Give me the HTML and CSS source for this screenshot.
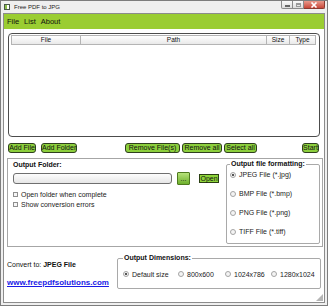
FILE: index.html
```html
<!DOCTYPE html>
<html lang="en">
<head>
    <meta charset="UTF-8">
    <title>Free PDF to JPG</title>
    <link rel="stylesheet" href="styles.css">
</head>
<body>
    <div class="window">
        <div class="titlebar">
            <span class="app-icon"></span>
            <span class="title">Free PDF to JPG</span>
            <div class="controls">
                <span class="ctl ctl-min"><span class="dash"></span></span>
                <span class="ctl ctl-max"><span class="square"></span></span>
                <span class="ctl ctl-close">
                    <svg width="8" height="6" viewBox="0 0 8 6"><path d="M1.5 0.5 L6.5 5.5 M6.5 0.5 L1.5 5.5" stroke="#fff" stroke-width="1.6"/></svg>
                </span>
            </div>
        </div>

        <div class="client">
            <nav class="menubar">
                <span>File</span>
                <span>List</span>
                <span>About</span>
            </nav>

            <div class="listbox">
                <div class="list-head">
                    <div class="col col-file">File</div>
                    <div class="col col-path">Path</div>
                    <div class="col col-size">Size</div>
                    <div class="col col-type">Type</div>
                </div>
            </div>

            <div class="toolbar">
                <button class="btn btn-addfile">Add File</button>
                <button class="btn btn-addfolder">Add Folder</button>
                <button class="btn btn-remove">Remove File(s)</button>
                <button class="btn btn-removeall">Remove all</button>
                <button class="btn btn-selectall">Select all</button>
                <button class="btn btn-start">Start</button>
            </div>

            <div class="output-panel">
                <div class="folder-col">
                    <div class="label-bold">Output Folder:</div>
                    <div class="folder-row">
                        <div class="folder-input"></div>
                        <button class="browse">...</button>
                        <button class="open">Open</button>
                    </div>
                    <div class="check"><span class="box"></span>Open folder when complete</div>
                    <div class="check"><span class="box"></span>Show conversion errors</div>
                </div>

                <fieldset class="group format-group">
                    <legend>Output file formatting:</legend>
                    <div class="radio on"><span class="dot"></span>JPEG File (*.jpg)</div>
                    <div class="radio"><span class="dot"></span>BMP File (*.bmp)</div>
                    <div class="radio"><span class="dot"></span>PNG File (*.png)</div>
                    <div class="radio"><span class="dot"></span>TIFF File (*.tiff)</div>
                </fieldset>
            </div>

            <div class="bottom">
                <div class="convert-col">
                    <div class="convert">Convert to: <b>JPEG File</b></div>
                    <a class="site-link" href="#">www.freepdfsolutions.com</a>
                </div>
                <fieldset class="group dim-group">
                    <legend>Output Dimensions:</legend>
                    <div class="dim-row">
                        <div class="radio on dim-default"><span class="dot"></span>Default size</div>
                        <div class="radio dim-800"><span class="dot"></span>800x600</div>
                        <div class="radio dim-1024"><span class="dot"></span>1024x786</div>
                        <div class="radio"><span class="dot"></span>1280x1024</div>
                    </div>
                </fieldset>
            </div>

            <div class="grip"></div>
        </div>
    </div>
</body>
</html>
```

FILE: styles.css
```css
* {
    box-sizing: border-box;
}

body {
    margin: 0;
    font-family: "Liberation Sans", Arial, sans-serif;
    font-size: 7px;
    color: #111;
    background: #fff;
}

.window {
    width: 328px;
    height: 306px;
    border: 1px solid #7d7d7d;
    background: #efefef;
    padding: 0 2px 2px 2px;
    display: flex;
    flex-direction: column;
}

/* title bar */
.titlebar {
    height: 12px;
    display: flex;
    align-items: center;
    flex-shrink: 0;
}

.app-icon {
    width: 6px;
    height: 6px;
    margin-left: 1px;
    border: 1px solid #4a5a4a;
    background: linear-gradient(90deg, #8cbf4a 50%, #fff 50%);
}

.title {
    margin-left: 4px;
    font-size: 6px;
    color: #222;
}

.controls {
    margin-left: auto;
    align-self: flex-start;
    display: flex;
}

.ctl {
    height: 8px;
    border: 1px solid #8a8a8a;
    border-top: none;
    display: flex;
    align-items: center;
    justify-content: center;
    background: linear-gradient(#fafafa, #dcdcdc);
}

.ctl-min {
    width: 12px;
    border-radius: 0 0 0 2px;
}

.ctl-max {
    width: 11px;
    border-left: none;
}

.ctl-close {
    width: 21px;
    border-left: none;
    border-color: #8a3a30;
    border-radius: 0 0 2px 0;
    background: linear-gradient(#e99a8c, #c8483a);
}

.dash {
    width: 5px;
    height: 2px;
    margin-top: 2px;
    border: 1px solid #666;
    background: #fff;
}

.square {
    width: 5px;
    height: 4px;
    border: 1px solid #999;
    border-top-width: 2px;
}

/* client area */
.client {
    flex: 1;
    position: relative;
    background: #fff;
    border: 1px solid #8c8c8c;
    display: flex;
    flex-direction: column;
}

.menubar {
    height: 15px;
    flex-shrink: 0;
    background: #9acd32;
    display: flex;
    align-items: center;
    gap: 5px;
    padding-left: 3px;
    font-size: 7.5px;
    color: #111;
}

.listbox {
    height: 104px;
    margin: 4px 4px 0 4px;
    border: 1px solid #4c4c4c;
    border-radius: 4px;
    padding: 1px 2px;
    flex-shrink: 0;
}

.list-head {
    display: flex;
    height: 10px;
}

.col {
    border: 1px solid #b4b4b4;
    border-left: none;
    background: linear-gradient(#ffffff, #e9e9e9);
    font-size: 6.5px;
    text-align: center;
    line-height: 8px;
}

.col-file {
    width: 70px;
    border-left: 1px solid #b4b4b4;
}

.col-path {
    width: 186px;
}

.col-size {
    width: 23px;
}

.col-type {
    width: 26px;
}

/* buttons row */
.toolbar {
    display: flex;
    margin-top: 6px;
    padding: 0 5px 0 4px;
    flex-shrink: 0;
}

.btn {
    height: 10px;
    padding: 0;
    font-family: inherit;
    font-size: 7px;
    line-height: 8px;
    white-space: nowrap;
    overflow: visible;
    color: #111;
    border: 1px solid #2f3f1f;
    border-radius: 3px;
    background: #8ccf3c;
}

.btn-addfile {
    width: 28px;
}

.btn-addfolder {
    width: 36px;
    margin-left: 5px;
}

.btn-remove {
    width: 55px;
    margin-left: 48px;
}

.btn-removeall {
    width: 40px;
    margin-left: 2px;
}

.btn-selectall {
    width: 33px;
    margin-left: 2px;
}

.btn-start {
    width: 17px;
    margin-left: auto;
}

/* output folder panel */
.output-panel {
    height: 89px;
    margin: 5px 1px 0 3px;
    border: 1px solid #a6a6a6;
    display: flex;
    flex-shrink: 0;
}

.folder-col {
    padding: 1px 0 0 5px;
}

.label-bold {
    font-weight: bold;
    line-height: 9px;
}

.folder-row {
    display: flex;
    align-items: center;
    margin-top: 3px;
    height: 13px;
}

.folder-input {
    width: 159px;
    height: 11px;
    border: 1px solid #6f6f6f;
    border-radius: 3px;
    background: linear-gradient(#fdfdfd, #e6e6e6);
}

.browse {
    width: 13px;
    height: 13px;
    margin-left: 5px;
    padding: 0;
    font-family: inherit;
    font-size: 7px;
    line-height: 8px;
    color: #111;
    border: 1px solid #4e7a1e;
    border-radius: 1px;
    background: linear-gradient(#b6e27a, #6eb02c);
}

.open {
    width: 20px;
    height: 9px;
    margin-left: 9px;
    padding: 0;
    font-family: inherit;
    font-size: 7px;
    line-height: 7px;
    color: #111;
    border: 1px solid #2a3f12;
    background: #8ed43a;
}

.check {
    display: flex;
    align-items: center;
    height: 10px;
    color: #222;
}

.folder-row + .check {
    margin-top: 4px;
}

.box {
    width: 5px;
    height: 5px;
    margin-right: 3px;
    border: 1px solid #8e8e8e;
    background: #f6f6f6;
}

/* group boxes */
.group {
    margin: 0;
    border: 1px solid #a9a9a9;
    border-radius: 2px;
    min-width: 0;
}

.group legend {
    padding: 0 1px;
    font-weight: bold;
    line-height: 8px;
}

.format-group {
    width: 94px;
    margin: 1px 2px 2px auto;
    padding: 0 3px;
}

.radio {
    display: flex;
    align-items: center;
    color: #222;
    white-space: nowrap;
}

.format-group .radio {
    height: 19px;
}

.format-group legend + .radio {
    margin-top: -3px;
}

.dot {
    width: 6px;
    height: 6px;
    margin-right: 3px;
    border: 1px solid #a4a4a4;
    border-radius: 50%;
    background: #f4f4f4;
    display: flex;
    align-items: center;
    justify-content: center;
}

.radio.on .dot::after {
    content: "";
    width: 2px;
    height: 2px;
    border-radius: 50%;
    background: #222;
}

/* bottom area */
.bottom {
    display: flex;
    margin-top: 7px;
    padding-left: 3px;
}

.convert-col {
    width: 110px;
    padding-top: 6px;
    display: flex;
    flex-direction: column;
    align-items: flex-start;
}

.convert {
    line-height: 9px;
}

.site-link {
    margin-top: 9px;
    font-size: 8px;
    font-weight: bold;
    color: #1a1ae6;
    line-height: 9px;
}

.dim-group {
    flex: 1;
    height: 35px;
    margin-right: 3px;
    padding: 0 5px;
}

.dim-row {
    display: flex;
    margin-top: 7px;
    height: 10px;
}

.dim-default {
    width: 55px;
}

.dim-800 {
    width: 47px;
}

.dim-1024 {
    width: 46px;
}

.grip {
    position: absolute;
    right: 1px;
    bottom: 1px;
    width: 7px;
    height: 7px;
    background: radial-gradient(circle, #b0b0b0 0.7px, transparent 0.8px) 0 0 / 2px 2px;
    clip-path: polygon(100% 0, 100% 100%, 0 100%);
}
```
